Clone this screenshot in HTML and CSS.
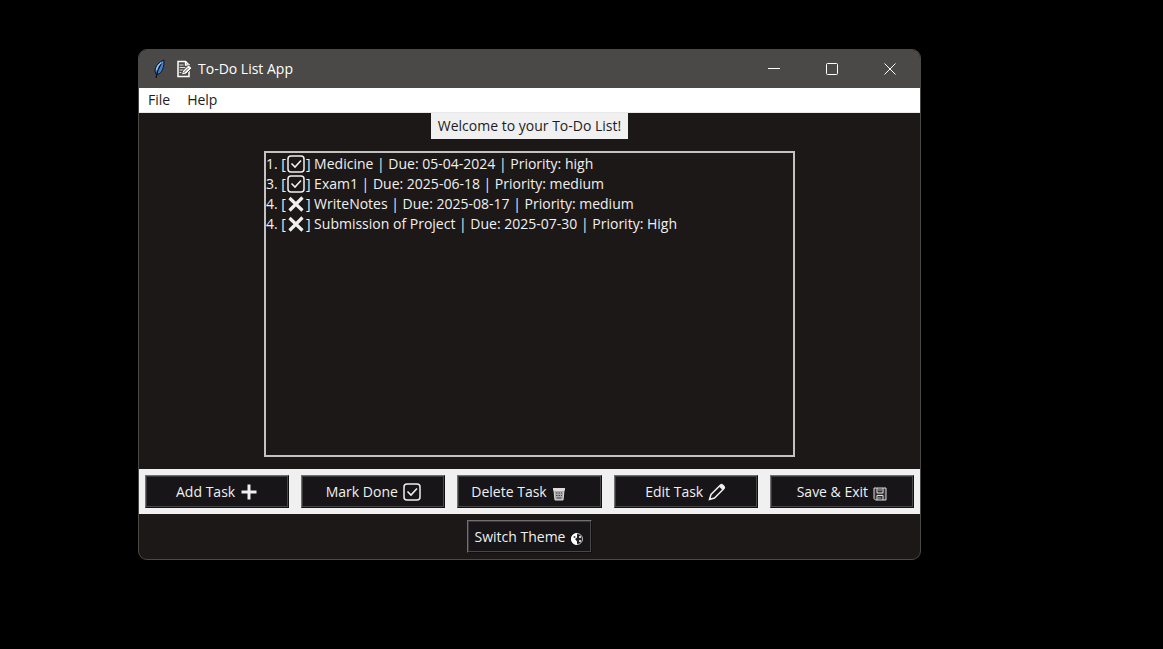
FILE: index.html
```html
<!DOCTYPE html>
<html lang="en">
<head>
<meta charset="utf-8">
<title>To-Do List App</title>
<link rel="stylesheet" href="styles.css">
</head>
<body>
<svg class="defs" width="0" height="0" aria-hidden="true">
  <symbol id="done" viewBox="0 0 18 18"><rect x="1" y="1" width="16" height="16" rx="3" fill="none" stroke="currentColor" stroke-width="1.5"/><path d="M4.500 8.500 8 12 14 5.500" fill="none" stroke="currentColor" stroke-width="1.600"/></symbol>
  <symbol id="cross" viewBox="0 0 18 18"><path d="M2.500 3 15.500 15.500M15.500 2.500 2.500 15.500" fill="none" stroke="currentColor" stroke-width="3.200"/></symbol>
</svg>
<main class="window">
  <header class="titlebar">
    <svg class="feather" viewBox="0 0 14 20"><path d="M12 1C7 3 3 7 3 12l1 3 3 0C11 12 12 7 12 1Z" fill="#3f82d2" stroke="#10151c" stroke-width="1"/><path d="M9.500 4C7 8 5 12 4 19" fill="none" stroke="#111" stroke-width="1.200"/><path d="M9.500 3.500C6 6 5 8 4.500 11" fill="none" stroke="#9cc8f2" stroke-width="1.400"/></svg>
    <svg class="memo" viewBox="0 0 16 18"><path d="M1.500 1.500H9L12.500 5v11.500h-11Z" fill="none" stroke="#fff" stroke-width="1.500"/><path d="M9 1v4h4" fill="none" stroke="#fff" stroke-width="1.300"/><path d="M3 5h4M3 7.500h6M3 10h4M3 12.500h2" stroke="#ddd" fill="none"/><path d="m5 15 1-4 6-6 3.500 3L9.500 14Z" fill="#fff" stroke="#4b4947"/><path d="m7 13 5-5" stroke="#4b4947" fill="none"/></svg>
    <h1 class="title">To-Do List App</h1>
    <div class="controls">
      <button class="control" aria-label="Minimize"><svg viewBox="0 0 12 12"><path d="M0 5.500h12"/></svg></button>
      <button class="control" aria-label="Maximize"><svg viewBox="0 0 12 12"><rect x=".5" y=".5" width="11" height="11" rx="1"/></svg></button>
      <button class="control" aria-label="Close"><svg viewBox="0 0 12 12"><path d="m.5.5 11 11m0-11-11 11"/></svg></button>
    </div>
  </header>
  <nav class="menubar">
    <button class="menu">File</button>
    <button class="menu">Help</button>
  </nav>
  <section class="content">
    <p class="welcome">Welcome to your To-Do List!</p>
    <ul class="tasks">
      <li class="task">1. [<svg class="mark"><use href="#done"/></svg>] Medicine | Due: 05-04-2024 | Priority: high</li>
      <li class="task">3. [<svg class="mark"><use href="#done"/></svg>] Exam1 | Due: 2025-06-18 | Priority: medium</li>
      <li class="task">4. [<svg class="mark"><use href="#cross"/></svg>] WriteNotes | Due: 2025-08-17 | Priority: medium</li>
      <li class="task">4. [<svg class="mark"><use href="#cross"/></svg>] Submission of Project | Due: 2025-07-30 | Priority: High</li>
    </ul>
  </section>
  <div class="actions">
    <button class="button">Add Task <svg class="icon" viewBox="0 0 18 18"><path d="M9 1.500v15M1.500 9h15" stroke="currentColor" stroke-width="3"/></svg></button>
    <button class="button">Mark Done <svg class="icon"><use href="#done"/></svg></button>
    <button class="button button-wide-glyph">Delete Task <svg class="icon icon-small" viewBox="0 0 14 14"><path d="M1 1h12v2.500H1Z" fill="#ddd"/><path d="M2 3.500h10L11 13H3Z" fill="#aaa" stroke="#ddd"/><path d="M4 6h1.500M6.500 6H8M9 6h1M4 8.500h1.500M6.500 8.500H8M9 8.500h1M4.500 11h5" stroke="#444"/></svg></button>
    <button class="button">Edit Task <svg class="icon" viewBox="0 0 18 18"><path d="m1.500 16.500 1.500-5L12.500 2a1.500 1.500 0 0 1 2 0L16 3.500a1.500 1.500 0 0 1 0 2L6.500 15Z" fill="none" stroke="currentColor" stroke-width="1.500"/><path d="m11 3.500 1.500-1.500h2L16 3.500v2L14.500 7Z" fill="currentColor"/><path d="m1 17 1-3 2 2Z" fill="currentColor"/></svg></button>
    <button class="button">Save &amp; Exit <svg class="icon icon-small" viewBox="0 0 14 14"><path d="M1 1h12v12H2.500L1 11.500Z" fill="#333" stroke="#ddd"/><path d="M4 1v5h6V1M4 13V8.500h6V13" fill="none" stroke="#ddd"/><path d="M5 3h4M5 11h3" stroke="#aaa"/></svg></button>
  </div>
  <footer class="footer">
    <button class="button button-theme">Switch Theme <svg class="icon icon-small" viewBox="0 0 14 14"><circle cx="7" cy="7" r="5.500" fill="#222" stroke="#bbb"/><path d="M7 1a6 6 0 0 0 0 12V9.500L5 7l2-1.500Z" fill="#fff"/><circle cx="4.500" cy="5" r="1" fill="#444"/><path d="M9 4h2v2H9ZM9 8h2v2H9Z" fill="#ccc"/></svg></button>
  </footer>
</main>
</body>
</html>
```
FILE: styles.css
```css
* { box-sizing: border-box; }
body {
  margin: 0;
  padding: 49px 242px 89px 138px;
  background: #000;
  color: #f0f0f0;
  font: 14px/20px "Open Sans", "Noto Sans", sans-serif;
}
button { font: inherit; color: inherit; border: 0; background: none; padding: 0; }
.defs { position: absolute; }
.window {
  border: 1px solid #4b4947;
  border-radius: 9px;
  background: #1c1817;
  overflow: hidden;
}
.titlebar { display: flex; align-items: center; height: 38px; padding-left: 13px; background: #4b4947; color: #fff; }
.feather { width: 14px; height: 20px; }
.memo { width: 17px; height: 18px; margin: 0 5px 0 10px; }
.title { margin: 0; font-size: 14px; font-weight: 400; }
.controls { display: flex; margin-left: auto; padding-right: 1px; }
.control { display: grid; place-items: center; width: 58px; height: 38px; }
.control svg { width: 12px; height: 12px; fill: none; stroke: #fff; }
.menubar { display: flex; gap: 17px; height: 25px; padding: 2px 9px; background: #fff; color: #1c1c24; border-bottom: 1px solid #e8e8e8; }
.content { display: flex; flex-direction: column; align-items: center; padding-bottom: 12px; }
.welcome { margin: 0 0 12px; padding: 3px 7px; background: #f0f0f0; color: #1c1c24; }
.tasks {
  width: 531px; max-width: 100%; height: 306px; margin: 0; padding: 1px 0;
  list-style: none; border: 2px solid #c4c2c1;
}
.task { height: 20px; white-space: nowrap; }
.mark { width: 18px; height: 18px; margin: 0 1px; vertical-align: -4px; }
.actions { display: grid; grid-template-columns: repeat(5, 1fr); gap: 12px; padding: 6px; background: #f0f0f0; }
.button {
  display: flex; align-items: center; justify-content: center; gap: 5px;
  height: 33px; background: #171517; white-space: nowrap;
  border: 1px solid; border-color: #707070 #101010 #101010 #707070;
  box-shadow: inset -1px -1px #484848, inset 1px 1px #383838;
}
.button-wide-glyph { padding-right: 22px; }
.icon { width: 18px; height: 18px; }
.icon-small { width: 14px; height: 14px; margin-top: 4px; }
.footer { display: flex; justify-content: center; padding: 6px; }
.button-theme { padding: 0 7px; }
```
